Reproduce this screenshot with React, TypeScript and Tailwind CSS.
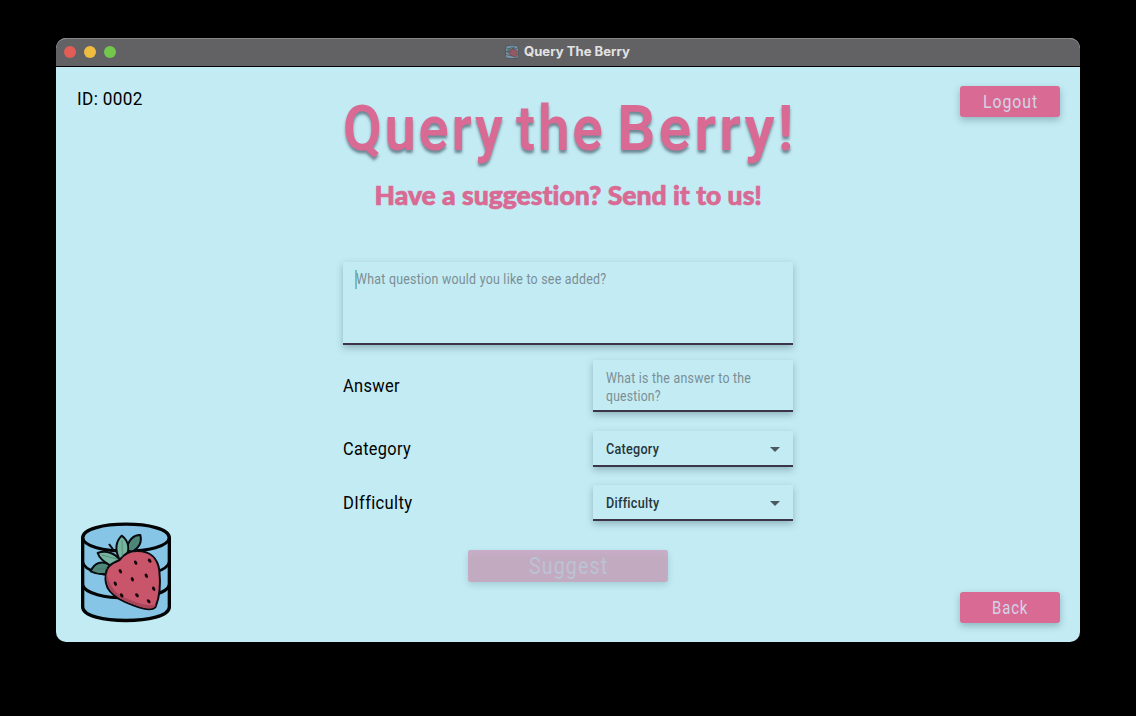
import { useLayoutEffect, useRef } from "react";

type FitProps = { text: string; className: string };

// Condenses a line of text horizontally until it fills its box.
function Fit({ text, className }: FitProps) {
  const box = useRef<HTMLSpanElement>(null);
  const line = useRef<HTMLSpanElement>(null);
  useLayoutEffect(() => {
    if (box.current && line.current) {
      const ratio = box.current.offsetWidth / line.current.offsetWidth;
      line.current.style.transform = `scaleX(${ratio})`;
    }
  });
  return (
    <span ref={box} className={`block shrink-0 whitespace-nowrap ${className}`}>
      <span ref={line} className="inline-block origin-left align-top">{text}</span>
    </span>
  );
}

function Logo({ className }: { className: string }) {
  const seeds = [
    [197, 151, -25], [239, 145, -40], [151, 177, -30], [187, 201, -20], [229, 190, -30],
    [136, 214, -25], [155, 249, -35], [201, 249, -40], [251, 229, -30], [236, 267, -40],
  ];
  return (
    <svg viewBox="30 29 276 303" className={className} preserveAspectRatio="none">
      <path d="M38 76C38 22 298 22 298 76V284C298 338 38 338 38 284Z" fill="#86c5e5" />
      <g fill="none" stroke="#020304" strokeWidth="10">
        <path d="M38 76C38 22 298 22 298 76V284C298 338 38 338 38 284Z" />
        <path d="M38 76C42 130 294 130 298 76" strokeWidth="9" />
        <path d="M38 148C44 205 288 205 298 148" strokeWidth="8" />
        <path d="M38 218C52 270 284 270 298 218" strokeWidth="9" />
      </g>
      <g stroke="#0a0c10" strokeWidth="6" strokeLinejoin="round">
        <path d="M62 177C73 151 97 143 119 158L114 184C96 187 76 184 62 177Z" fill="#4d8779" />
        <path d="M170 112C174 82 192 67 211 68C216 88 208 107 184 119Z" fill="#4d8779" />
        <path d="M83 122C108 111 136 124 150 143C143 153 131 160 119 158C101 148 88 138 83 122Z" fill="#76b6a1" />
        <path d="M147 139C134 110 138 87 155 70C176 86 181 111 165 139Z" fill="#76b6a1" />
        <path d="M134 118L117 95" fill="none" />
        <path d="M108 184C108 160 133 149 149 143C163 123 178 115 202 116C239 116 263 136 268 174C272 212 271 249 257 283C247 299 214 288 190 279C161 269 134 255 119 236C109 223 104 205 108 184Z" fill="#c9556a" />
      </g>
      <path d="M110 181C119 225 138 246 174 260C202 272 234 282 258 278C247 298 214 285 190 276C147 259 101 234 110 181Z" fill="#a9455b" />
      <path d="M95 128L145 141M156 84L157 133M80 169L112 169M202 79L183 107" fill="none" stroke="#47796d" strokeWidth="2" />
      <g fill="#14090d">
        {seeds.map(([x, y, r]) => (
          <ellipse key={`${x}-${y}`} cx={x} cy={y} rx="4.5" ry="7" transform={`rotate(${r} ${x} ${y})`} />
        ))}
      </g>
    </svg>
  );
}

function ActionButton({ text, width }: { text: string; width: string }) {
  return (
    <button className="flex h-[31px] w-[100px] items-center justify-center rounded-[3px] bg-[#d96a94] text-[19px] leading-[31px] tracking-[0.06em] text-[#d3d5e7] shadow-[0_3px_7px_rgba(40,80,95,0.35)]">
      <Fit text={text} className={width} />
    </button>
  );
}

const field = "border-b-2 border-[#3b3547] text-[15px] leading-[18px] shadow-[0_3px_7px_rgba(50,80,95,0.35)]";

function SelectRow({ label, labelWidth, value, valueWidth }: { label: string; labelWidth: string; value: string; valueWidth: string }) {
  return (
    <div className="flex h-9 items-center justify-between">
      <Fit text={label} className={`text-[18.5px] leading-6 tracking-[0.02em] ${labelWidth}`} />
      <div className={`flex h-9 w-[200px] items-center justify-between pt-[2px] pr-[13px] pl-[13px] tracking-[0.02em] text-[#25363c] ${field}`}>
        <Fit text={value} className={`font-medium ${valueWidth}`} />
        <svg viewBox="0 0 10 5" className="h-[5px] w-[10px]">
          <path d="M0 0H10L5 5Z" fill="#4a5a5f" />
        </svg>
      </div>
    </div>
  );
}

export default function App() {
  return (
    <div className="h-[716px] w-[1136px] bg-black px-14 pt-[38px] font-['Roboto',sans-serif]">
      <main className="flex h-[604px] w-[1024px] flex-col overflow-hidden rounded-[10px] bg-[#c3ebf3]">
        <header className="grid h-[29px] shrink-0 grid-cols-[1fr_auto_1fr] items-center rounded-t-[10px] border-t border-b border-t-[#858587] border-b-black bg-[#626264] pb-[2px]">
          <div className="flex gap-2 pl-2">
            <span className="size-3 rounded-full bg-[#e25d56]" />
            <span className="size-3 rounded-full bg-[#eebd40]" />
            <span className="size-3 rounded-full bg-[#72c74c]" />
          </div>
          <div className="flex items-center gap-[5px] pr-[2px] font-[Inter,sans-serif] text-[12.5px] leading-4 font-bold text-[#e2e2e3]">
            <Logo className="h-[14px] w-[14px] opacity-50" />
            <Fit text="Query The Berry" className="w-[106px]" />
          </div>
        </header>
        <div className="grid min-h-0 flex-1 grid-cols-[287px_450px_287px]">
          <aside className="flex flex-col justify-between pt-[20px] pb-[19px] pl-[21px] text-black">
            <Fit text="ID: 0002" className="w-[66px] text-[19px] leading-6 tracking-[0.02em]" />
            <Logo className="ml-[3px] h-[101px] w-[92px]" />
          </aside>
          <section className="flex flex-col text-black">
            <h1 className="mt-[30px] flex text-[63px] leading-[64px] font-semibold tracking-[0.05em] text-[#d96a94] [text-shadow:0_3px_3px_rgba(50,70,85,0.6)]">
              <Fit text="Query" className="w-[163px]" />
              <Fit text="the" className="ml-[10px] w-[90px]" />
              <Fit text="Berry!" className="ml-[11px] w-[180px]" />
            </h1>
            <h2 className="mt-[18px] flex justify-center font-['Lato',sans-serif] text-[26.5px] leading-8 font-black text-[#d96a94] [-webkit-text-stroke:0.7px_#d96a94]">
              <Fit text="Have a suggestion? Send it to us!" className="w-[387px] [font-variant-ligatures:none]" />
            </h2>
            <div className={`mt-[51px] flex h-[83px] pt-[8px] pl-[12px] tracking-[0.02em] text-[#7b8e93] ${field}`}>
              <span className="h-[19px] w-[2px] bg-[#70c0cc]" />
              <Fit text="What question would you like to see added?" className="-ml-px w-[250px]" />
            </div>
            <div className="mt-[15px] flex h-[52px] items-center justify-between">
              <Fit text="Answer" className="w-[57px] text-[18.5px] leading-6 tracking-[0.02em]" />
              <div className={`h-[52px] w-[200px] pt-[9px] pl-[13px] tracking-[0.02em] text-[#7b8e93] ${field}`}>
                <Fit text="What is the answer to the" className="w-[145px]" />
                <Fit text="question?" className="w-[55px]" />
              </div>
            </div>
            <div className="mt-[19px] flex flex-col gap-[18px]">
              <SelectRow label="Category" labelWidth="w-[68px]" value="Category" valueWidth="w-[53px]" />
              <SelectRow label="DIfficulty" labelWidth="w-[69px]" value="Difficulty" valueWidth="w-[53px]" />
            </div>
            <button className="mt-[29px] flex h-8 w-[200px] items-center justify-center self-center rounded-[3px] bg-[#c2abc1] pt-[2px] text-[23px] leading-8 tracking-[0.06em] text-[#bcc2d5] shadow-[0_3px_6px_rgba(50,90,105,0.2),inset_0_4px_5px_rgba(205,175,205,0.6)]">
              <Fit text="Suggest" className="w-[79px]" />
            </button>
          </section>
          <aside className="flex flex-col items-end justify-between pt-[19px] pr-[20px] pb-[19px]">
            <ActionButton text="Logout" width="w-[55px]" />
            <ActionButton text="Back" width="w-[36px]" />
          </aside>
        </div>
      </main>
    </div>
  );
}
